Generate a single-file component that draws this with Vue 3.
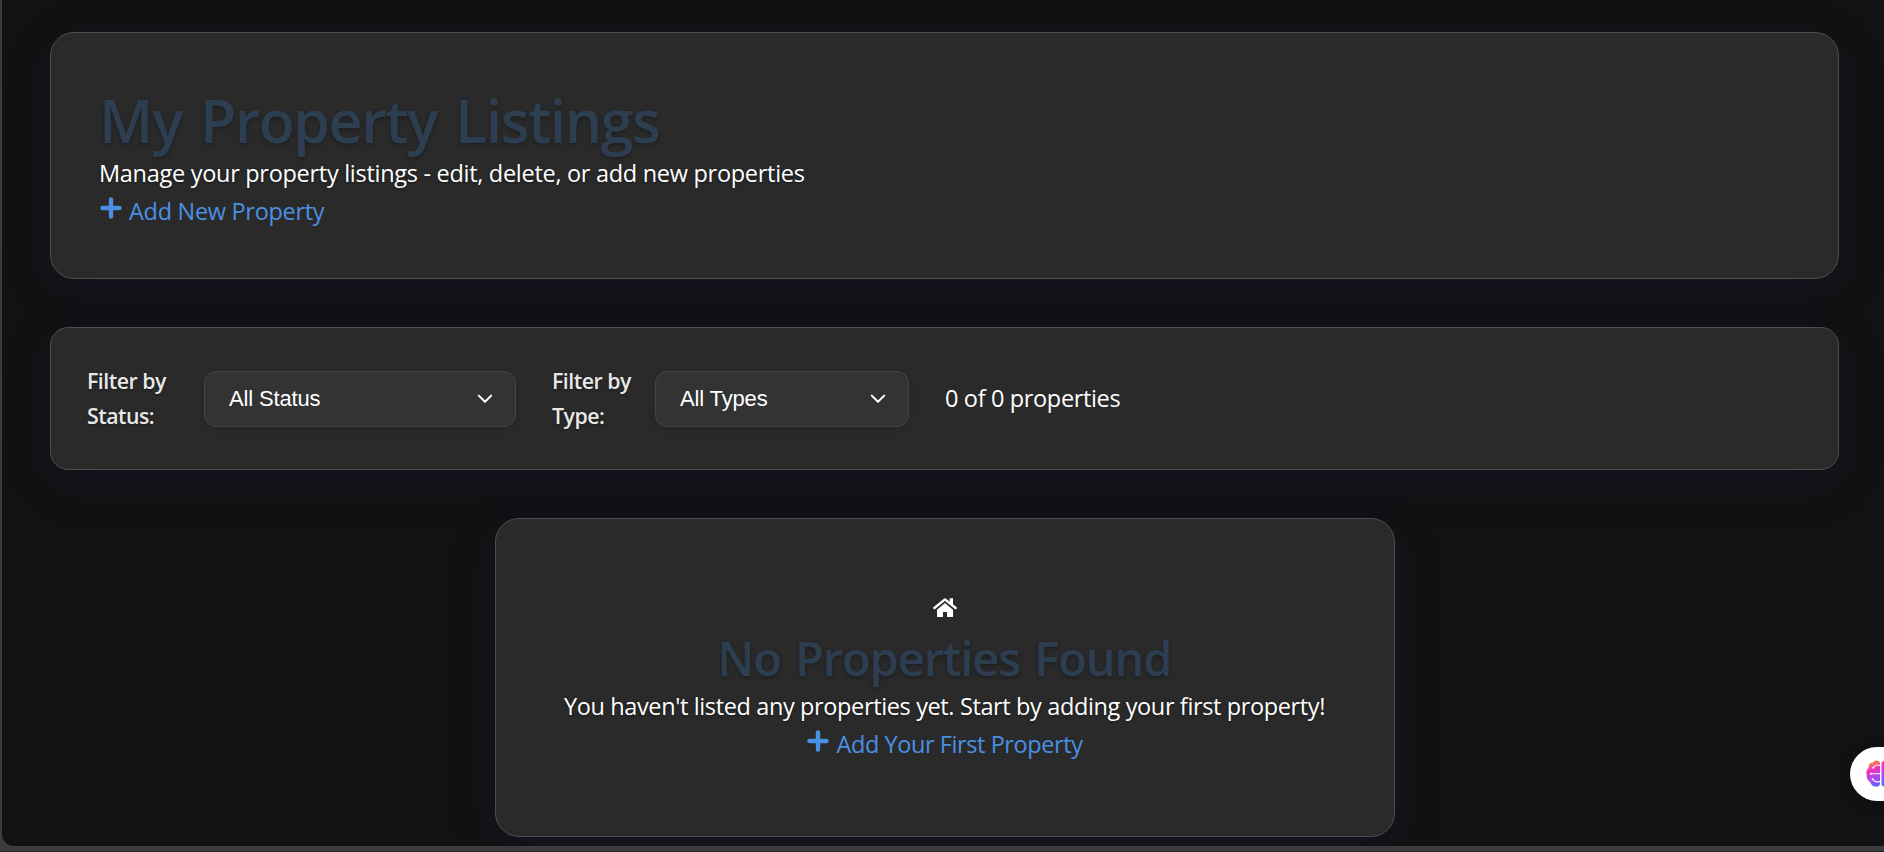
<script setup>
const filters = [
  { key: 'status', label: ['Filter by', 'Status:'], value: 'All Status' },
  { key: 'type', label: ['Filter by', 'Type:'], value: 'All Types' },
]
</script>

<template>
  <div class="window">
    <main class="page">
      <header class="card header">
        <h1>My Property Listings</h1>
        <p class="intro">Manage your property listings - edit, delete, or add new properties</p>
        <a class="link">
          <svg class="plus" viewBox="0 0 22 22"><path d="M11 2.500v17M2.500 11h17" /></svg>
          <span>Add New Property</span>
        </a>
      </header>

      <section class="card filters">
        <div v-for="f in filters" :key="f.key" class="group" :class="f.key">
          <label>{{ f.label[0] }}<br />{{ f.label[1] }}</label>
          <div class="select">
            <span>{{ f.value }}</span>
            <svg class="chevron" viewBox="0 0 16 10"><path d="M1.800 1.600L8 7.800l6.200-6.200" /></svg>
          </div>
        </div>
        <span class="count">0 of 0 properties</span>
      </section>

      <section class="card empty">
        <div class="icon-row">
          <svg class="house" viewBox="0 0 24 20">
            <path d="M12 5L4 11.700V19h6v-5h4v5h6v-7.300z" fill="#fff" />
            <path d="M16.700 0.300H20V8l-3.300-3z" fill="#fff" />
            <path d="M1.400 10L12 1.400 22.600 10" fill="none" stroke="#fff" stroke-width="2.400" stroke-linecap="round" stroke-linejoin="round" />
          </svg>
        </div>
        <h3>No Properties Found</h3>
        <p class="message">You haven't listed any properties yet. Start by adding your first property!</p>
        <a class="link first">
          <svg class="plus" viewBox="0 0 22 22"><path d="M11 2.500v17M2.500 11h17" /></svg>
          <span>Add Your First Property</span>
        </a>
      </section>
    </main>

    <div class="assistant">
      <svg viewBox="0 0 30 28">
        <defs>
          <linearGradient id="brain" gradientUnits="userSpaceOnUse" x1="5" y1="1" x2="17" y2="27">
            <stop offset="0" stop-color="#ff9a1f" />
            <stop offset="0.3" stop-color="#f02fc2" />
            <stop offset="0.65" stop-color="#a04df5" />
            <stop offset="1" stop-color="#3f6fff" />
          </linearGradient>
        </defs>
        <g fill="url(#brain)">
          <path d="M14 3.500C14 0 8.500-.3 7 2.500 4 2.500 2 5 2.700 8 .3 9.500-.2 13 .8 15c-.4 4 1.500 6 3.700 7.500C5.500 27.500 14 28.500 14 23.500z" />
          <path d="M15.500 3.500C15.500 0 21.500-.3 23 2.500c3 0 5 2.500 4.300 5.500 2.400 1.500 2.900 5 1.900 7 .4 4-1.500 6-3.700 7.500C24.500 27.500 15.500 28.500 15.500 23.500z" />
        </g>
        <g fill="none" stroke="#fff" stroke-width="1.100" stroke-linecap="round">
          <path d="M14 5.500c-3-1-5.500 0-6.500 2M14 13.700H5M14 21.500c-3 .8-6-.2-7.500-2.500" />
        </g>
        <g fill="#fff">
          <circle cx="7.300" cy="7.800" r="1" />
          <circle cx="5" cy="13.700" r="1" />
          <circle cx="6.700" cy="19.200" r="1" />
        </g>
      </svg>
    </div>
  </div>
</template>

<style>
body {
  background: #3c3c3c;
  overflow: hidden;
}
</style>

<style scoped>
.window {
  position: relative;
  box-sizing: border-box;
  height: 852px;
  padding: 0 0 6px 2px;
  overflow: hidden;
  background: linear-gradient(#3c3c3c 851px, #252525 851px);
  color: #fff;
  font-family: "Open Sans", "Noto Sans", sans-serif;
  font-size: 23.5px;
  line-height: 38.4px;
}
.page {
  box-sizing: border-box;
  height: 846px;
  padding: 32px 45px 0 48px;
  background: #121212;
  border-bottom-left-radius: 12px;
  overflow: hidden;
}
.card {
  box-sizing: border-box;
  background: #2a2a2a;
  border: 1px solid #4e4e4e;
  border-radius: 24px;
  box-shadow: 0 12px 48px rgba(31, 38, 135, 0.15);
}
.header {
  height: 247px;
  padding: 49px 48px 0;
}
h1,
h3,
p {
  margin: 0;
}
h1 {
  margin-bottom: -5px;
  color: #2c3e50;
  font-size: 59px;
  font-weight: 600;
  line-height: 77px;
  letter-spacing: -1.45px;
  word-spacing: 4px;
  text-shadow: 0 2px 4px rgba(0, 0, 0, 0.3);
}
.intro,
.message {
  text-shadow: 0 1px 3px rgba(0, 0, 0, 0.4);
}
.intro {
  letter-spacing: -0.29px;
}
.link {
  display: flex;
  align-items: flex-start;
  gap: 7px;
  color: #4a90e2;
  letter-spacing: -0.3px;
}
.plus {
  width: 22px;
  height: 22px;
  margin: 5px 0 0 1px;
  fill: none;
  stroke: #4a90e2;
  stroke-width: 4.4;
  stroke-linecap: round;
}
.filters {
  display: flex;
  align-items: center;
  height: 143px;
  margin-top: 48px;
  padding: 0 36px;
  border-radius: 18px;
}
.group {
  display: flex;
  align-items: center;
  margin-right: 36px;
}
label {
  width: 117px;
  color: #e8e8e8;
  font-size: 21.3px;
  font-weight: 600;
  line-height: 34.2px;
  letter-spacing: -0.5px;
  white-space: nowrap;
  text-shadow: 0 1px 3px rgba(0, 0, 0, 0.4);
}
.type label {
  width: 103px;
}
.select {
  display: flex;
  align-items: center;
  justify-content: space-between;
  box-sizing: border-box;
  width: 312px;
  height: 56px;
  padding: 0 22px 0 24px;
  background: #333;
  border: 1px solid #444;
  border-radius: 12px;
  box-shadow: 0 2px 8px rgba(0, 0, 0, 0.12);
  font-family: "Liberation Sans", Arial, sans-serif;
  font-size: 22px;
  line-height: 26px;
  letter-spacing: -0.15px;
}
.type .select {
  width: 254px;
}
.chevron {
  width: 16px;
  height: 10px;
  fill: none;
  stroke: #fff;
  stroke-width: 2;
  stroke-linecap: round;
  stroke-linejoin: round;
}
.count {
  letter-spacing: -0.35px;
}
.empty {
  width: 900px;
  height: 319px;
  margin: 48px auto 0;
  padding: 72px 0;
  text-align: center;
}
.icon-row {
  display: flex;
  justify-content: center;
  height: 38.4px;
}
.house {
  width: 24px;
  height: 20px;
  margin-top: 7px;
}
h3 {
  margin-bottom: -2px;
  color: #2c3e50;
  font-size: 47px;
  font-weight: 600;
  line-height: 59.6px;
  letter-spacing: -1.1px;
  word-spacing: 3px;
  text-shadow: 0 2px 4px rgba(0, 0, 0, 0.3);
}
.message {
  letter-spacing: -0.37px;
}
.first {
  justify-content: center;
  letter-spacing: -0.42px;
}
.assistant {
  position: absolute;
  top: 747px;
  left: 1850px;
  display: flex;
  align-items: center;
  box-sizing: border-box;
  width: 80px;
  height: 54px;
  padding-left: 16px;
  background: #fff;
  border-radius: 27px;
  box-shadow: 0 4px 12px rgba(0, 0, 0, 0.2);
}
.assistant svg {
  width: 30px;
  height: 28px;
}
</style>
